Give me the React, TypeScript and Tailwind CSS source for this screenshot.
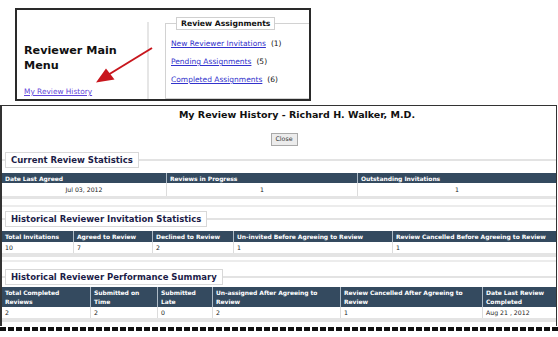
import React from "react";

type TableProps = {
  cols: string;
  headers: string[];
  values: string[];
  headH: string;
  rowH: string;
  center?: boolean;
};

function Legend({ title }: { title: string }) {
  return (
    <div className="flex items-center h-[16px]">
      <div className="w-[3px] h-[2px] bg-[#e3e3e3]" />
      <div className="h-[16px] px-[5px] flex items-center border border-[#d8d8d8] bg-white text-[8.5px] font-bold leading-none whitespace-nowrap text-[#1c1c48]">
        {title}
      </div>
      <div className="flex-1 h-[2px] bg-[#e3e3e3]" />
    </div>
  );
}

function StatTable({ cols, headers, values, headH, rowH, center }: TableProps) {
  return (
    <div>
      <div className={`grid ${cols} bg-[#344a5f]`}>
        {headers.map((h, i) => (
          <div
            key={i}
            className={`${headH} px-[3px] pt-[1px] text-white font-bold text-[6px] leading-[9px] tracking-[-0.05px] ${
              i > 0 ? "border-l border-[#aebbc6]" : ""
            }`}
          >
            {h}
          </div>
        ))}
      </div>
      <div className={`grid ${cols} bg-white`}>
        {values.map((v, i) => (
          <div
            key={i}
            className={`${rowH} px-[3px] flex items-center text-[6.2px] text-[#222] ${
              center ? "justify-center" : ""
            } ${i > 0 ? "border-l border-[#dcdcdc]" : ""}`}
          >
            {v}
          </div>
        ))}
      </div>
    </div>
  );
}

export default function App() {
  return (
    <div className="relative w-[558px] h-[337px] overflow-hidden bg-white font-['DejaVu_Sans',sans-serif]">
      {/* menu snippet */}
      <div className="ml-[15px] mt-[8px] w-[296px] h-[93px] border-2 border-[#2a2a2a] flex">
        <div className="w-[130px] pl-[7px] flex flex-col">
          <h2 className="mt-[33px] text-[11.2px] leading-[15px] font-bold text-[#111]">
            Reviewer Main
            <br />
            Menu
          </h2>
          <a href="#" className="mt-[14px] text-[7.4px] leading-[10px] text-[#5f44d9] underline">
            My Review History
          </a>
        </div>
        <div className="w-[2px] mt-[12px] bg-[#e6e6e6]" />
        <fieldset className="flex-1 ml-[16px] mt-[7px] border border-r-0 border-[#d2d2d2] pl-[5px]">
          <legend className="ml-[5px] h-[13px] px-[4px] flex items-center border border-[#cfcfcf] bg-white text-[7.7px] font-bold text-[#111]">
            Review Assignments
          </legend>
          <div className="mt-[5px] flex flex-col text-[7.5px] leading-[18px] text-[#111]">
            <div>
              <a href="#" className="text-[#3232cc] underline">New Reviewer Invitations</a>
              <span className="ml-[5px]">(1)</span>
            </div>
            <div>
              <a href="#" className="text-[#3232cc] underline">Pending Assignments</a>
              <span className="ml-[5px]">(5)</span>
            </div>
            <div>
              <a href="#" className="text-[#3232cc] underline">Completed Assignments</a>
              <span className="ml-[5px]">(6)</span>
            </div>
          </div>
        </fieldset>
      </div>

      {/* red arrow */}
      <svg className="absolute left-0 top-0 pointer-events-none" width="558" height="110" viewBox="0 0 558 110">
        <line x1="152" y1="48" x2="103" y2="78" stroke="#c8161d" strokeWidth="2" />
        <polygon points="96,82.5 106,68.5 114.5,79.5" fill="#c8161d" />
      </svg>

      {/* review history window */}
      <div className="mt-[4px] w-[557px] h-[221px] border-l-2 border-t border-r border-[#333]">
        <h1 className="pt-[3px] pl-[36px] text-center text-[9.5px] leading-[12px] font-bold text-[#111]">
          My Review History - Richard H. Walker, M.D.
        </h1>
        <div className="mt-[12px] pl-[10px] flex justify-center">
          <button className="w-[27px] h-[13px] border border-[#a9a9a9] bg-[#ececec] text-[6.3px] text-[#333] leading-none">
            Close
          </button>
        </div>

        <div className="mt-[6px]">
          <Legend title="Current Review Statistics" />
        </div>
        <div className="mt-[5px]">
          <StatTable
            cols="grid-cols-[164px_191px_1fr]"
            headers={["Date Last Agreed", "Reviews in Progress", "Outstanding Invitations"]}
            values={["Jul 03, 2012", "1", "1"]}
            headH="h-[10px] whitespace-nowrap"
            rowH="h-[13px]"
            center
          />
        </div>
        <div className="h-[3px] bg-[#e4e4e4]" />
        <div className="mt-[6px] h-[2px] bg-[#ececec]" />

        <div className="mt-[4px]">
          <Legend title="Historical Reviewer Invitation Statistics" />
        </div>
        <div className="mt-[4px]">
          <StatTable
            cols="grid-cols-[71px_79px_81px_159px_1fr]"
            headers={[
              "Total Invitations",
              "Agreed to Review",
              "Declined to Review",
              "Un-invited Before Agreeing to Review",
              "Review Cancelled Before Agreeing to Review",
            ]}
            values={["10", "7", "2", "1", "1"]}
            headH="h-[11px] whitespace-nowrap overflow-hidden"
            rowH="h-[11px]"
          />
        </div>
        <div className="h-[4px] bg-[#e4e4e4]" />
        <div className="mt-[3px] h-[2px] bg-[#ececec]" />

        <div className="mt-[7px]">
          <Legend title="Historical Reviewer Performance Summary" />
        </div>
        <div className="mt-[2px]">
          <StatTable
            cols="grid-cols-[88px_67px_55px_128px_142px_1fr]"
            headers={[
              "Total Completed Reviews",
              "Submitted on Time",
              "Submitted Late",
              "Un-assigned After Agreeing to Review",
              "Review Cancelled After Agreeing to Review",
              "Date Last Review Completed",
            ]}
            values={["2", "2", "0", "2", "1", "Aug 21 , 2012"]}
            headH="h-[20px]"
            rowH="h-[11px]"
          />
        </div>
        <div className="h-[4px] bg-[#e4e4e4]" />
      </div>
      <div className="mt-[1px] w-[558px] h-[4px] bg-[repeating-linear-gradient(90deg,#111_0px,#111_6px,transparent_6px,transparent_8px)]" />
    </div>
  );
}
